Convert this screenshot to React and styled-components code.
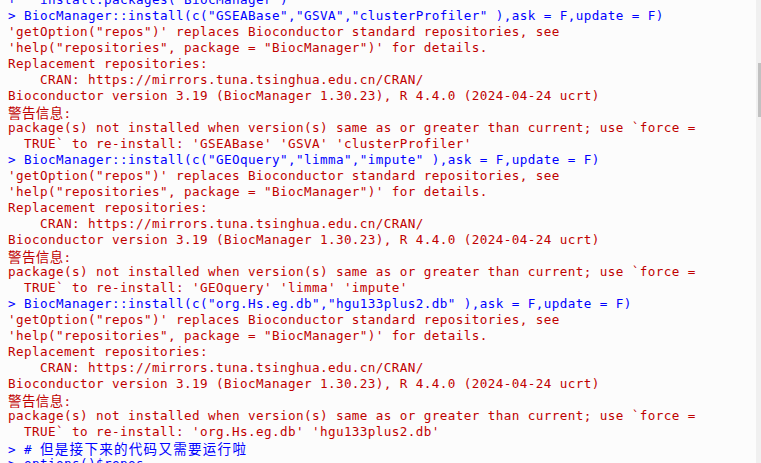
import React from "react";
import styled, { createGlobalStyle } from "styled-components";

const Global = createGlobalStyle`
  html, body { margin: 0; padding: 0; background: #fcfcfc; overflow: hidden; }
  #root { width: 761px; height: 463px; }
`;

const Window = styled.div`
  display: flex;
  width: 761px;
  height: 463px;
  overflow: hidden;
  background: #fcfcfc;
`;

const Console = styled.div`
  flex: 1;
  overflow: hidden;
  padding-left: 8px;
`;

const Log = styled.div`
  margin-top: -8px;
  font-family: "DejaVu Sans Mono", "Liberation Mono", "Noto Sans CJK SC", monospace;
  font-size: 12.6px;
  letter-spacing: 0.415px;
  line-height: 16px;
`;

const Line = styled.div`
  height: 16px;
  white-space: pre;
  color: ${(p) => (p.$kind === "cmd" ? "#0000ff" : "#c00000")};
`;

const Cjk = styled.span`
  font-family: "Noto Sans CJK SC", sans-serif;
  font-size: 13.5px;
  line-height: 16px;
  letter-spacing: ${(p) => p.$spacing || 0.4}px;
`;

const Track = styled.div`
  width: 5px;
  height: 100%;
  background: #f0f0f0;
  display: flex;
  justify-content: flex-end;
`;

const Thumb = styled.div`
  width: 3px;
  height: 54px;
  margin-top: 63px;
  background: #c1c1c1;
`;

const block = (cmd, pkgs) => [
  { k: "cmd", t: cmd },
  { k: "out", t: `'getOption("repos")' replaces Bioconductor standard repositories, see` },
  { k: "out", t: `'help("repositories", package = "BiocManager")' for details.` },
  { k: "out", t: "Replacement repositories:" },
  { k: "out", t: "    CRAN: https://mirrors.tuna.tsinghua.edu.cn/CRAN/" },
  { k: "out", t: "Bioconductor version 3.19 (BiocManager 1.30.23), R 4.4.0 (2024-04-24 ucrt)" },
  { k: "warn" },
  { k: "out", t: "package(s) not installed when version(s) same as or greater than current; use `force =" },
  { k: "out", t: "  TRUE` to re-install: " + pkgs },
];

const lines = [
  { k: "cmd", t: `+   install.packages("BiocManager")` },
  ...block(
    `> BiocManager::install(c("GSEABase","GSVA","clusterProfiler" ),ask = F,update = F)`,
    "'GSEABase' 'GSVA' 'clusterProfiler'"
  ),
  ...block(
    `> BiocManager::install(c("GEOquery","limma","impute" ),ask = F,update = F)`,
    "'GEOquery' 'limma' 'impute'"
  ),
  ...block(
    `> BiocManager::install(c("org.Hs.eg.db","hgu133plus2.db" ),ask = F,update = F)`,
    "'org.Hs.eg.db' 'hgu133plus2.db'"
  ),
  { k: "comment" },
  { k: "cmd", t: "> options()$repos" },
];

export default function App() {
  return (
    <>
      <Global />
      <Window>
        <Console>
          <Log>
            {lines.map((l, i) => {
              if (l.k === "warn")
                return (
                  <Line key={i} $kind="out">
                    <Cjk>警告信息</Cjk>:
                  </Line>
                );
              if (l.k === "comment")
                return (
                  <Line key={i} $kind="cmd">
                    {"> # "}
                    <Cjk $spacing={1.3}>但是接下来的代码又需要运行啦</Cjk>
                  </Line>
                );
              return (
                <Line key={i} $kind={l.k}>
                  {l.t}
                </Line>
              );
            })}
          </Log>
        </Console>
        <Track>
          <Thumb />
        </Track>
      </Window>
    </>
  );
}
